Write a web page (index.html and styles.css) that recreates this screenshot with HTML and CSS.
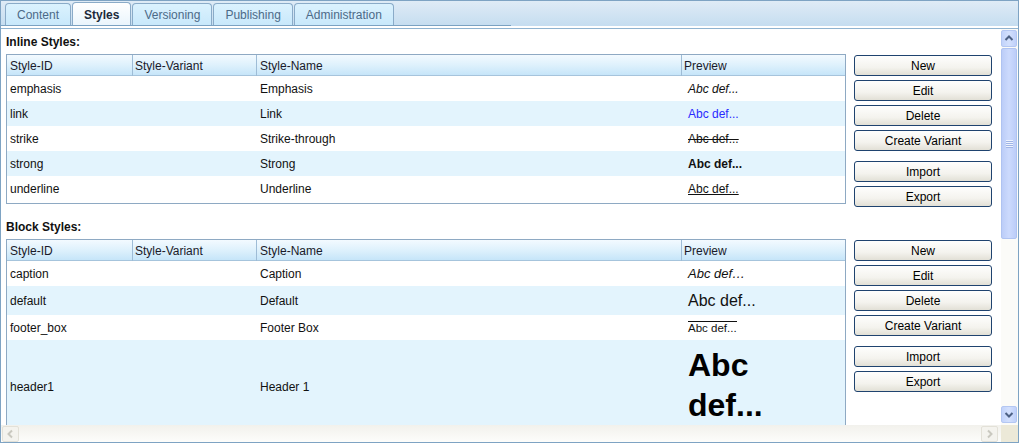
FILE: index.html
```html
<!DOCTYPE html>
<html>
<head>
<meta charset="utf-8">
<title>Styles</title>
<link rel="stylesheet" href="styles.css">
</head>
<body>
<div class="frame">
  <div class="tabbar">
    <div class="tabs">
      <div class="tab">Content</div>
      <div class="tab active">Styles</div>
      <div class="tab">Versioning</div>
      <div class="tab">Publishing</div>
      <div class="tab">Administration</div>
    </div>
  </div>
  <div class="spacer"></div>
  <div class="viewport">
    <div class="content">
      <div class="section">
        <div class="section-title">Inline Styles:</div>
        <div class="section-body">
          <div class="grid grid-inline">
            <div class="row head">
              <div class="cell">Style-ID</div>
              <div class="cell">Style-Variant</div>
              <div class="cell">Style-Name</div>
              <div class="cell">Preview</div>
            </div>
            <div class="row">
              <div class="cell">emphasis</div><div class="cell"></div><div class="cell">Emphasis</div>
              <div class="cell pv"><span class="pv-em">Abc def...</span></div>
            </div>
            <div class="row alt">
              <div class="cell">link</div><div class="cell"></div><div class="cell">Link</div>
              <div class="cell pv"><span class="pv-link">Abc def...</span></div>
            </div>
            <div class="row">
              <div class="cell">strike</div><div class="cell"></div><div class="cell">Strike-through</div>
              <div class="cell pv"><span class="pv-strike">Abc def...</span></div>
            </div>
            <div class="row alt">
              <div class="cell">strong</div><div class="cell"></div><div class="cell">Strong</div>
              <div class="cell pv"><span class="pv-strong">Abc def...</span></div>
            </div>
            <div class="row">
              <div class="cell">underline</div><div class="cell"></div><div class="cell">Underline</div>
              <div class="cell pv"><span class="pv-u">Abc def...</span></div>
            </div>
          </div>
          <div class="buttons">
            <button class="btn">New</button>
            <button class="btn">Edit</button>
            <button class="btn">Delete</button>
            <button class="btn">Create Variant</button>
            <button class="btn sep">Import</button>
            <button class="btn">Export</button>
          </div>
        </div>
      </div>
      <div class="section">
        <div class="section-title">Block Styles:</div>
        <div class="section-body">
          <div class="grid">
            <div class="row head">
              <div class="cell">Style-ID</div>
              <div class="cell">Style-Variant</div>
              <div class="cell">Style-Name</div>
              <div class="cell">Preview</div>
            </div>
            <div class="row">
              <div class="cell">caption</div><div class="cell"></div><div class="cell">Caption</div>
              <div class="cell pv"><span class="pv-caption">Abc def…</span></div>
            </div>
            <div class="row alt row-default">
              <div class="cell">default</div><div class="cell"></div><div class="cell">Default</div>
              <div class="cell pv"><span class="pv-default">Abc def...</span></div>
            </div>
            <div class="row">
              <div class="cell">footer_box</div><div class="cell"></div><div class="cell">Footer Box</div>
              <div class="cell pv"><span class="pv-footer">Abc def...</span></div>
            </div>
            <div class="row alt row-h1">
              <div class="cell">header1</div><div class="cell"></div><div class="cell">Header 1</div>
              <div class="cell pv pv-top"><span class="pv-h1">Abc def...</span></div>
            </div>
          </div>
          <div class="buttons">
            <button class="btn">New</button>
            <button class="btn">Edit</button>
            <button class="btn">Delete</button>
            <button class="btn">Create Variant</button>
            <button class="btn sep">Import</button>
            <button class="btn">Export</button>
          </div>
        </div>
      </div>
    </div>
    <div class="vscroll">
      <div class="sb-btn">
        <svg width="16" height="17" viewBox="0 0 16 17"><polyline points="4.5,10 8,6.5 11.5,10" fill="none" stroke="#4d6185" stroke-width="2"/></svg>
      </div>
      <div class="thumb">
        <div class="grip"></div><div class="grip"></div><div class="grip"></div><div class="grip"></div>
      </div>
      <div class="track"></div>
      <div class="sb-btn">
        <svg width="16" height="17" viewBox="0 0 16 17"><polyline points="4.5,7 8,10.5 11.5,7" fill="none" stroke="#4d6185" stroke-width="2"/></svg>
      </div>
    </div>
    <div class="hscroll">
      <div class="hs-btn">
        <svg width="17" height="16" viewBox="0 0 17 16"><polyline points="10,4.5 6.5,8 10,11.5" fill="none" stroke="#c9c8bf" stroke-width="2"/></svg>
      </div>
      <div class="track"></div>
      <div class="hs-btn">
        <svg width="17" height="16" viewBox="0 0 17 16"><polyline points="7,4.5 10.5,8 7,11.5" fill="none" stroke="#c9c8bf" stroke-width="2"/></svg>
      </div>
    </div>
    <div class="corner"></div>
  </div>
</div>
</body>
</html>
```
FILE: styles.css
```css
* { box-sizing: border-box; }

body {
  margin: 0;
  background: #ffffff;
  font-family: "Liberation Sans", Arial, sans-serif;
  font-size: 12px;
  color: #111111;
}

.frame {
  width: 1019px;
  height: 443px;
  border: 1px solid #7ea3c3;
  display: flex;
  flex-direction: column;
  overflow: hidden;
}

.tabbar {
  flex: none;
  height: 25px;
  background: linear-gradient(#dfebf6, #c5ddf0);
}

.tabs {
  display: flex;
  align-items: flex-end;
  gap: 1px;
  width: 510px;
  height: 25px;
  padding-left: 4px;
  border-bottom: 1px solid #7ba2c2;
}

.tab {
  height: 22px;
  padding: 1px 11px 0;
  border: 1px solid #8aabc8;
  border-bottom: none;
  border-radius: 4px 4px 0 0;
  background: linear-gradient(#dbf2fe, #c8e8fb);
  color: #4c6a88;
  line-height: 20px;
  white-space: nowrap;
}

.tab.active {
  height: 23px;
  background: linear-gradient(#ffffff, #eaf5fc);
  font-weight: bold;
  color: #1c2a3a;
  line-height: 22px;
}

.spacer { flex: none; height: 2px; }

.viewport {
  flex: 1;
  min-height: 0;
  display: grid;
  grid-template-columns: 1000px 17px;
  grid-template-rows: 396px 17px;
  border-top: 1px solid #8fb3d0;
}

.content {
  overflow: hidden;
  padding-left: 5px;
}

.section + .section { margin-top: 7px; }

.section-title {
  font-weight: bold;
  line-height: 16px;
  padding-top: 5px;
  margin-bottom: 4px;
  color: #111;
}

.section-body {
  display: flex;
  align-items: flex-start;
  gap: 8px;
}

.grid {
  width: 840px;
  flex: none;
  border: 1px solid #8ea9c3;
  border-bottom: none;
}

.grid-inline {
  height: 150px;
  border-bottom: 1px solid #8ea9c3;
}

.row {
  display: grid;
  grid-template-columns: 126px 124px 425px 163px;
  height: 25px;
  align-items: center;
}

.row.alt { background: #e3f4fd; }
.row.row-default { height: 29px; }
.row.row-h1 { height: 94px; }

.cell {
  padding: 1px 3px 0;
  white-space: nowrap;
  line-height: 15px;
}

.cell.pv { padding-left: 6px; }
.cell.pv-top { align-self: start; padding-top: 5px; }

.row.head {
  height: 21px;
  align-items: stretch;
  border-bottom: 1px solid #a6c4dc;
  background: linear-gradient(#f3faff, #dcf0fc 55%, #c6e5f9);
}

.row.head .cell {
  line-height: 20px;
  color: #1a1a2a;
}

.row.head .cell + .cell { padding-left: 2px; }
.row.head .cell:nth-child(-n+3) { border-right: 1px solid #9ebcd6; }
.row.head .cell:nth-child(3) { padding-left: 3px; }

.pv-em { font-style: italic; }
.pv-link { color: #2a2aff; }
.pv-strike { text-decoration: line-through; }
.pv-strong { font-weight: bold; }
.pv-u { text-decoration: underline; }
.pv-caption { font-style: italic; font-size: 13px; }
.pv-default { font-size: 16px; line-height: 18px; }
.pv-footer {
  font-size: 11.5px;
  border-top: 1px solid #111;
  line-height: 13px;
  display: inline-block;
}
.pv-h1 {
  display: block;
  width: 120px;
  white-space: normal;
  font-size: 32px;
  font-weight: bold;
  line-height: 40px;
  color: #000;
}

.buttons {
  width: 138px;
  flex: none;
  margin-top: 1px;
  display: flex;
  flex-direction: column;
  gap: 4px;
}

.btn {
  display: block;
  width: 138px;
  height: 21px;
  padding: 1px 0 0;
  border: 1px solid #1f436f;
  border-radius: 3px;
  background: linear-gradient(#fefefd, #f4f3ee 60%, #e2e0d6);
  font-family: "Liberation Sans", Arial, sans-serif;
  font-size: 12px;
  color: #000;
  line-height: 18px;
  text-align: center;
}

.btn.sep { margin-top: 6px; }

.vscroll {
  display: flex;
  flex-direction: column;
  padding: 1px 1px 2px 0;
  background: #fbfbf8;
}

.sb-btn {
  flex: none;
  height: 17px;
  border: 1px solid #b4c7f2;
  border-radius: 2px;
  background: linear-gradient(90deg, #c2d3fb, #d3e0fd 50%, #bfd0fa);
  display: flex;
  align-items: center;
  justify-content: center;
}

.sb-btn svg { display: block; margin: -1px; }

.thumb {
  flex: none;
  margin-top: 1px;
  height: 191px;
  border: 1px solid #afc3f1;
  border-radius: 2px;
  background: linear-gradient(90deg, #bccdf8, #ccdafd 50%, #bccdf8);
  display: flex;
  flex-direction: column;
  align-items: center;
  justify-content: center;
  gap: 1px;
}

.grip {
  width: 7px;
  height: 1px;
  background: #eef3fe;
  box-shadow: 0 1px 0 #9fb4e6;
}

.track { flex: 1; }

.hscroll {
  display: flex;
  padding: 1px 3px 0 1px;
  background: linear-gradient(#f2f1ec, #fdfdfb);
}

.hs-btn {
  flex: none;
  width: 17px;
  height: 16px;
  border: 1px solid #e3e1d8;
  border-radius: 2px;
  background: #f4f3ee;
  display: flex;
  align-items: center;
  justify-content: center;
}

.hs-btn svg { display: block; margin: -1px; }

.corner { background: #ece9d8; }
```
